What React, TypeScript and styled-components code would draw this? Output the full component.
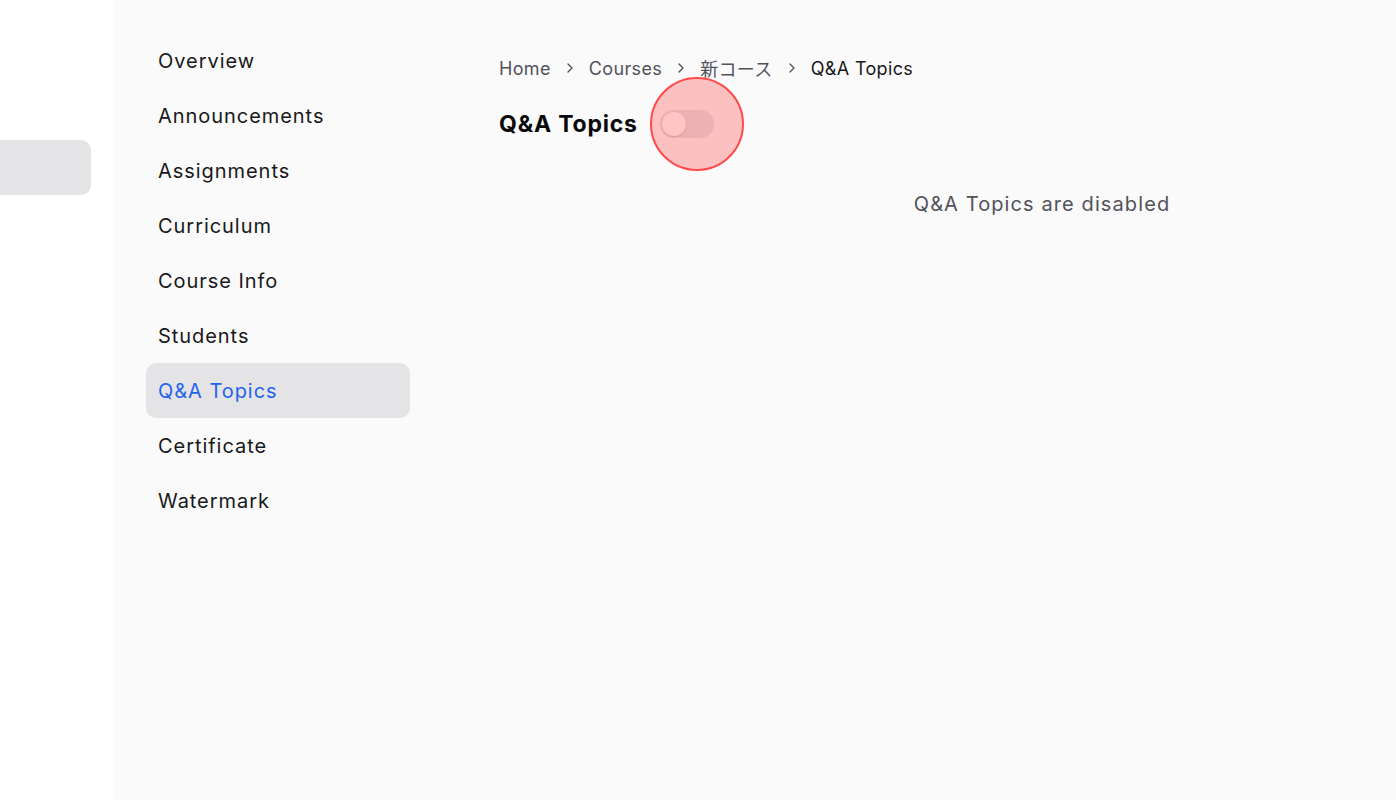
import React from 'react'
import styled, { createGlobalStyle } from 'styled-components'

const Global = createGlobalStyle`
  html, body {
    margin: 0;
    padding: 0;
    overflow: hidden;
    background: #fafafa;
    font-family: Inter, 'Noto Sans CJK JP', sans-serif;
  }
`

const navItems = [
  'Overview',
  'Announcements',
  'Assignments',
  'Curriculum',
  'Course Info',
  'Students',
  'Q&A Topics',
  'Certificate',
  'Watermark',
]

const crumbs = ['Home', 'Courses', '新コース']

function App() {
  return (
    <Layout>
      <Global />
      <Rail>
        <RailPill />
      </Rail>
      <Main>
        <SubNav>
          {navItems.map((item) => (
            <NavItem key={item} $active={item === 'Q&A Topics'}>
              {item}
            </NavItem>
          ))}
        </SubNav>
        <Content>
          <Breadcrumb>
            {crumbs.map((c) => (
              <React.Fragment key={c}>
                <Crumb>{c}</Crumb>
                <Chevron viewBox="0 0 24 24">
                  <path d="m9 18 6-6-6-6" />
                </Chevron>
              </React.Fragment>
            ))}
            <Crumb $current>Q&A Topics</Crumb>
          </Breadcrumb>
          <TitleRow>
            <Title>Q&A Topics</Title>
            <Toggle>
              <Thumb />
              <ClickMark />
            </Toggle>
          </TitleRow>
          <EmptyState>Q&A Topics are disabled</EmptyState>
        </Content>
      </Main>
    </Layout>
  )
}

const Layout = styled.div`
  display: flex;
  width: 1396px;
  height: 800px;
`

const Rail = styled.div`
  width: 114px;
  flex-shrink: 0;
  background: #ffffff;
  padding-top: 140px;
  box-sizing: border-box;
`

const RailPill = styled.div`
  width: 91px;
  height: 55px;
  background: #e4e4e7;
  border-radius: 0 10px 10px 0;
`

const Main = styled.div`
  flex: 1;
  display: flex;
  background: #fafafa;
  padding: 33px 0 0 32px;
  box-sizing: border-box;
`

const SubNav = styled.nav`
  width: 264px;
  flex-shrink: 0;
  display: flex;
  flex-direction: column;
`

const NavItem = styled.div<{ $active?: boolean }>`
  height: 55px;
  display: flex;
  align-items: center;
  padding-left: 12px;
  border-radius: 10px;
  font-size: 20px;
  letter-spacing: 0.95px;
  color: ${(p) => (p.$active ? '#2563eb' : '#18181b')};
  background: ${(p) => (p.$active ? '#e4e4e7' : 'transparent')};
`

const Content = styled.div`
  flex: 1;
  margin-left: 89px;
  padding-top: 22px;
  display: flex;
  flex-direction: column;
`

const Breadcrumb = styled.div`
  display: flex;
  align-items: center;
  gap: 11px;
  font-size: 18px;
  letter-spacing: 0.35px;
  height: 26px;
`

const Crumb = styled.span<{ $current?: boolean }>`
  color: ${(p) => (p.$current ? '#18181b' : '#52525b')};
`

const Chevron = styled.svg`
  width: 16px;
  height: 16px;
  fill: none;
  stroke: #52525b;
  stroke-width: 2;
  stroke-linecap: round;
  stroke-linejoin: round;
`

const TitleRow = styled.div`
  display: flex;
  align-items: center;
  gap: 22px;
  margin-top: 28px;
  height: 30px;
`

const Title = styled.h1`
  margin: 0;
  font-size: 23px;
  font-weight: 700;
  letter-spacing: 0.8px;
  color: #09090b;
`

const Toggle = styled.div`
  position: relative;
  width: 54px;
  height: 28px;
  border-radius: 14px;
  background: #e4e4e7;
  box-sizing: border-box;
  padding: 2px;
`

const Thumb = styled.div`
  width: 24px;
  height: 24px;
  border-radius: 50%;
  background: #ffffff;
  box-shadow: 0 1px 2px rgba(0, 0, 0, 0.15);
`

const ClickMark = styled.div`
  position: absolute;
  left: -10px;
  top: -33px;
  width: 94px;
  height: 94px;
  border-radius: 50%;
  border: 2.5px solid #ff4a4a;
  background: rgba(255, 60, 60, 0.3);
  box-sizing: border-box;
`

const EmptyState = styled.div`
  margin-top: 53px;
  padding-left: 189px;
  text-align: center;
  font-size: 20px;
  letter-spacing: 1.1px;
  color: #52525b;
`

export default App
